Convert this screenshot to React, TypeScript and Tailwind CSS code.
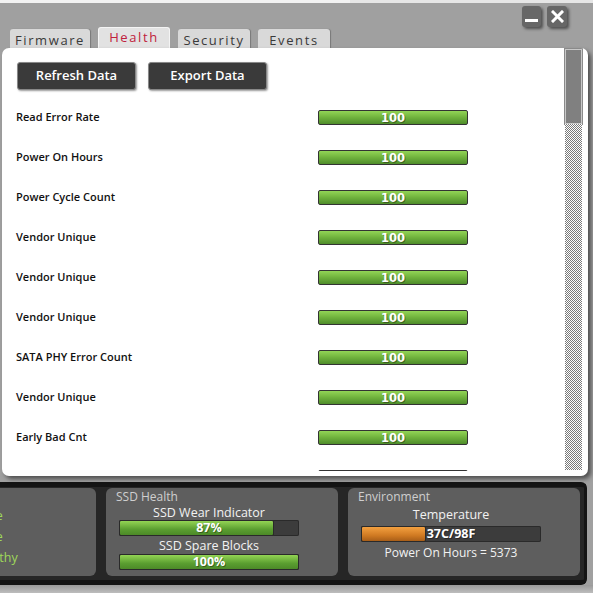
import React from "react";

const ROWS = [
  "Read Error Rate",
  "Power On Hours",
  "Power Cycle Count",
  "Vendor Unique",
  "Vendor Unique",
  "Vendor Unique",
  "SATA PHY Error Count",
  "Vendor Unique",
  "Early Bad Cnt",
  "Vendor Unique",
];

const TABS = [
  { name: "Firmware", w: "w-[80px]" },
  { name: "Health", w: "w-[72px]" },
  { name: "Security", w: "w-[72px]" },
  { name: "Events", w: "w-[72px]" },
];

function GaugeBar({ pct, label, color }: { pct: number; label: string; color: "green" | "orange" }) {
  const fill =
    color === "green"
      ? "bg-[linear-gradient(#93d454,#5a9e30_60%,#4c8a28)]"
      : "bg-[linear-gradient(#f3a040,#d07a22_60%,#a85e18)]";
  return (
    <div className="relative h-[16px] w-[180px] rounded-[2px] bg-[#3c3c3c] shadow-[inset_0_0_0_1px_#2a2a2a]">
      <div className={`h-full rounded-[2px] border border-[#2a2a2a] ${fill}`} style={{ width: `${pct}%` }} />
      <div className="absolute inset-0 flex items-center justify-center text-[12.5px] font-bold leading-none text-white [font-family:'Open_Sans',sans-serif] [text-shadow:1px_1px_0_rgba(0,0,0,0.35)]">
        {label}
      </div>
    </div>
  );
}

export default function App() {
  return (
    <div className="flex h-[593px] w-[593px] flex-col overflow-hidden bg-[#a0a0a0] [font-family:'Open_Sans',sans-serif]">
      {/* top strip */}
      <div className="flex h-[3px] shrink-0">
        <div className="w-[350px] bg-[#f2f2f2]" />
        <div className="flex-1 bg-[#e6e6e6]" />
      </div>

      {/* header: tabs + window buttons */}
      <div className="flex h-[45px] shrink-0 items-end pl-[10px]">
        <div className="flex items-end gap-[8px]">
          {TABS.map((t) => {
            const active = t.name === "Health";
            return (
              <div
                key={t.name}
                className={
                  active
                    ? `flex h-[21px] ${t.w} items-start justify-center rounded-t-[3px] border border-b-0 border-[#f4f4f4] bg-[#e2e2e2] pt-[1px] text-[13px] leading-[16px] tracking-[1.6px] text-[#c0213c]`
                    : `flex h-[19px] ${t.w} items-start justify-center rounded-t-[3px] bg-[#d9d9d9] pt-[3px] text-[13px] leading-[16px] tracking-[1.6px] text-[#3a3a3a] shadow-[1px_0_1px_rgba(0,0,0,0.25)]`
                }
              >
                {t.name}
              </div>
            );
          })}
        </div>
        <div className="mb-[21px] ml-auto mr-[26px] flex gap-[6px]">
          <div className="flex h-[21px] w-[19px] items-end justify-center rounded-[3px] bg-[#676767] pb-[5px] shadow-[2px_2px_3px_rgba(0,0,0,0.5)]">
            <div className="h-[3px] w-[13px] bg-white" />
          </div>
          <div className="flex h-[21px] w-[20px] items-center justify-center rounded-[3px] bg-[#676767] shadow-[2px_2px_3px_rgba(0,0,0,0.5)]">
            <svg width="13" height="13" viewBox="0 0 13 13">
              <path d="M2 2 L11 11 M11 2 L2 11" stroke="white" strokeWidth="3" strokeLinecap="square" />
            </svg>
          </div>
        </div>
      </div>

      {/* main white panel */}
      <div className="relative z-10 ml-[2px] flex h-[428px] w-[586px] shrink-0 overflow-hidden rounded-[7px] bg-white shadow-[3px_3px_4px_rgba(0,0,0,0.5)]">
        <div className="flex min-w-0 flex-1 flex-col">
          <div className="flex gap-[12px] pl-[15px] pt-[14px]">
            <button className="h-[28px] w-[119px] rounded-[3px] border border-[#888] bg-[#3a3a3a] text-[13px] font-semibold text-white shadow-[1px_1px_2px_rgba(0,0,0,0.4)]">
              Refresh Data
            </button>
            <button className="h-[28px] w-[119px] rounded-[3px] border border-[#888] bg-[#3a3a3a] text-[13px] font-semibold text-white shadow-[1px_1px_2px_rgba(0,0,0,0.4)]">
              Export Data
            </button>
          </div>
          <div className="mt-[7px] h-[374px] overflow-hidden">
            {ROWS.map((r, i) => (
              <div key={i} className="flex h-[40px] items-center pl-[14px]">
                <div className="w-[302px] text-[11px] font-semibold text-[#111]">{r}</div>
                <div className="flex h-[15px] w-[150px] items-center justify-center rounded-[2px] border border-[#333] bg-[linear-gradient(#92d456,#6fb13c_50%,#4f8d2b)] pt-[1px] text-[11.5px] font-bold leading-[12px] text-white [font-family:'DejaVu_Sans',sans-serif] [text-shadow:1px_1px_0_rgba(0,0,0,0.35)]">
                  100
                </div>
              </div>
            ))}
          </div>
        </div>
        {/* scrollbar */}
        <div className="mb-[6px] mr-[6px] mt-[1px] flex w-[17px] flex-col">
          <div className="h-[75px] border border-[#c8c8c8] bg-[#808080] outline outline-1 outline-[#8a8a8a]" />
          <div className="flex-1 bg-[repeating-conic-gradient(#7a7a7a_0%_25%,#ffffff_0%_50%)] bg-[length:2px_2px]" />
        </div>
      </div>

      {/* bottom status panel */}
      <div className="mt-[6px] flex h-[103px] w-[587px] shrink-0 gap-[10px] rounded-r-[6px] border-y-[5px] border-r-[3px] border-[#141414] bg-[#262626] pr-[4px] pt-[1px]">
        <div className="h-[88px] w-[96px] overflow-hidden rounded-r-[6px] bg-[#5e5e5e]">
          <div className="-ml-[27px] flex flex-col items-start whitespace-nowrap pt-[17px] text-[12.5px] leading-[21px] text-[#9fd85a]">
            <span className="-ml-[5px]">Active</span>
            <span className="-ml-[5px]">Active</span>
            <span>Healthy</span>
          </div>
        </div>
        <div className="h-[88px] w-[232px] rounded-[6px] bg-[#5e5e5e] pl-[10px] pt-[1px]">
          <div className="text-[12px] leading-[16px] text-[#cfcfcf]">SSD Health</div>
          <div className="ml-[3px] w-[180px]">
            <div className="text-center text-[12.5px] leading-[15px] text-[#f2f2f2]">SSD Wear Indicator</div>
            <GaugeBar pct={86} label="87%" color="green" />
            <div className="mt-[2px] text-center text-[12.5px] leading-[16px] text-[#f2f2f2]">SSD Spare Blocks</div>
            <GaugeBar pct={100} label="100%" color="green" />
          </div>
        </div>
        <div className="h-[88px] w-[232px] rounded-[6px] bg-[#5e5e5e] pl-[10px] pt-[1px]">
          <div className="text-[12px] leading-[16px] text-[#cfcfcf]">Environment</div>
          <div className="ml-[3px] w-[180px]">
            <div className="mt-[1px] text-center text-[12.5px] leading-[18px] text-[#f2f2f2]">Temperature</div>
            <div className="mt-[2px]">
              <GaugeBar pct={36} label="37C/98F" color="orange" />
            </div>
            <div className="mt-[3px] text-center text-[12px] leading-[16px] text-[#f2f2f2]">Power On Hours = 5373</div>
          </div>
        </div>
      </div>
      <div className="flex-1 bg-[linear-gradient(#9a9a9a,#bdbdbd)]" />
    </div>
  );
}
